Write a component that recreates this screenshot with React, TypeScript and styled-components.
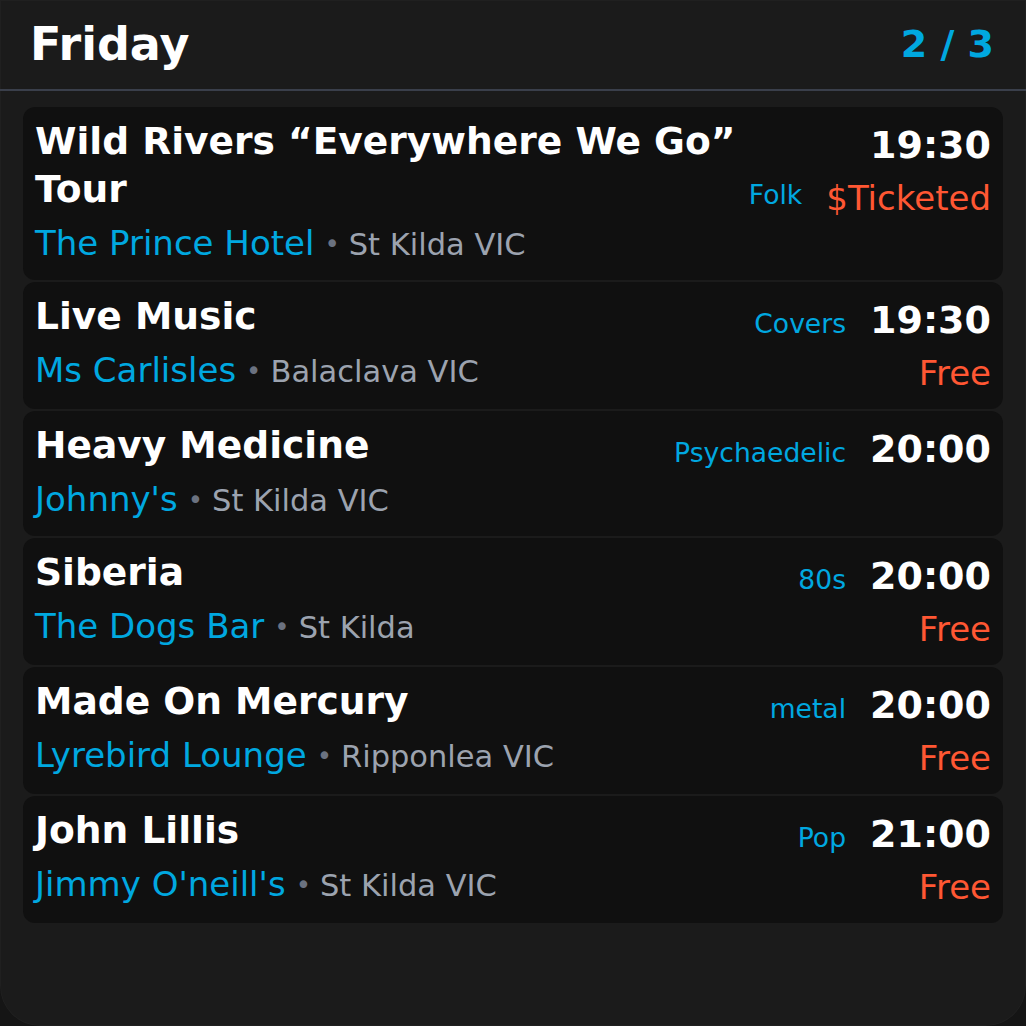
import React from 'react';
import styled, { createGlobalStyle } from 'styled-components';

const GlobalStyle = createGlobalStyle`
	html, body {
		margin: 0;
		padding: 0;
		background: #151515;
	}
	body {
		font-family: 'DejaVu Sans', 'Noto Sans', sans-serif;
		-webkit-font-smoothing: antialiased;
	}
	* {
		box-sizing: border-box;
	}
`;

type Gig = {
	id: string;
	title: string;
	venue: string;
	suburb: string;
	genre: string;
	time: string;
	price?: string;
	genreLow?: boolean;
};

const GIGS: Gig[] = [
	{
		id: 'wild-rivers',
		title: 'Wild Rivers “Everywhere We Go” Tour',
		venue: 'The Prince Hotel',
		suburb: 'St Kilda VIC',
		genre: 'Folk',
		time: '19:30',
		price: '$Ticketed',
		genreLow: true,
	},
	{
		id: 'live-music',
		title: 'Live Music',
		venue: 'Ms Carlisles',
		suburb: 'Balaclava VIC',
		genre: 'Covers',
		time: '19:30',
		price: 'Free',
	},
	{
		id: 'heavy-medicine',
		title: 'Heavy Medicine',
		venue: "Johnny's",
		suburb: 'St Kilda VIC',
		genre: 'Psychaedelic',
		time: '20:00',
	},
	{
		id: 'siberia',
		title: 'Siberia',
		venue: 'The Dogs Bar',
		suburb: 'St Kilda',
		genre: '80s',
		time: '20:00',
		price: 'Free',
	},
	{
		id: 'made-on-mercury',
		title: 'Made On Mercury',
		venue: 'Lyrebird Lounge',
		suburb: 'Ripponlea VIC',
		genre: 'metal',
		time: '20:00',
		price: 'Free',
	},
	{
		id: 'john-lillis',
		title: 'John Lillis',
		venue: "Jimmy O'neill's",
		suburb: 'St Kilda VIC',
		genre: 'Pop',
		time: '21:00',
		price: 'Free',
	},
];

const App = () => (
	<>
		<GlobalStyle />
		<Panel>
			<Header>
				<Day>Friday</Day>
				<Pager>2 / 3</Pager>
			</Header>
			<GigList>
				{GIGS.map(({ id, title, venue, suburb, genre, time, price, genreLow }) => (
					<GigCard key={id}>
						<Info>
							<Title>{title}</Title>
							<VenueLine>
								<Venue>{venue}</Venue>
								<Dot>•</Dot>
								<Suburb>{suburb}</Suburb>
							</VenueLine>
						</Info>
						<Meta>
							<TimeLine>
								{!genreLow && <Genre>{genre}</Genre>}
								<Time>{time}</Time>
							</TimeLine>
							{(price || genreLow) && (
								<PriceLine>
									{genreLow && <Genre $low>{genre}</Genre>}
									{price && <Price>{price}</Price>}
								</PriceLine>
							)}
						</Meta>
					</GigCard>
				))}
			</GigList>
		</Panel>
	</>
);

const Panel = styled.div`
	min-height: 100vh;
	background: #1b1b1b;
	border-radius: 0 0 40px 40px;
	box-shadow: inset 0 0 0 1px rgba(255, 255, 255, 0.025);
	display: flex;
	flex-direction: column;
`;

const Header = styled.header`
	display: flex;
	align-items: center;
	justify-content: space-between;
	height: 91px;
	padding: 0 32px 2px 30px;
	border-bottom: 2px solid #3a3f4b;
`;

const Day = styled.h1`
	margin: 0;
	color: #ffffff;
	font-size: 46px;
	font-weight: 700;
	line-height: 54px;
`;

const Pager = styled.span`
	color: #00a8e0;
	font-size: 38px;
	font-weight: 700;
	line-height: 52px;
`;

const GigList = styled.div`
	display: flex;
	flex-direction: column;
	gap: 2px;
	padding: 16px 23px;
`;

const GigCard = styled.div`
	display: flex;
	align-items: flex-start;
	gap: 4px;
	padding: 10px 12px 13px;
	background: #101010;
	border-radius: 12px;
`;

const Info = styled.div`
	flex: 1;
	min-width: 0;
	display: flex;
	flex-direction: column;
`;

const Title = styled.div`
	color: #ffffff;
	font-size: 37.6px;
	font-weight: 700;
	line-height: 48px;
`;

const VenueLine = styled.div`
	margin-top: 8px;
	font-size: 34px;
	line-height: 45px;
	white-space: nowrap;
`;

const Venue = styled.span`
	color: #00a8e0;
`;

const Dot = styled.span`
	color: #6b7280;
	font-size: 26px;
	margin: 0 9px 0 10px;
	vertical-align: 2px;
`;

const Suburb = styled.span`
	color: #9ca3af;
	font-size: 30.5px;
`;

const Meta = styled.div`
	display: flex;
	flex-direction: column;
	align-items: flex-end;
	flex-shrink: 0;
`;

const TimeLine = styled.div`
	display: flex;
	align-items: baseline;
	gap: 24px;
`;

const PriceLine = styled.div`
	display: flex;
	align-items: flex-start;
	gap: 24px;
	margin-top: 2px;
`;

const Genre = styled.span<{ $low?: boolean }>`
	color: #00a8e0;
	font-size: 26.6px;
	line-height: ${({ $low }) => ($low ? '39px' : '48px')};
`;

const Time = styled.span`
	color: #ffffff;
	font-size: 38px;
	font-weight: 700;
	line-height: 56px;
`;

const Price = styled.span`
	color: #ff5733;
	font-size: 34px;
	line-height: 46px;
`;

export default App;
